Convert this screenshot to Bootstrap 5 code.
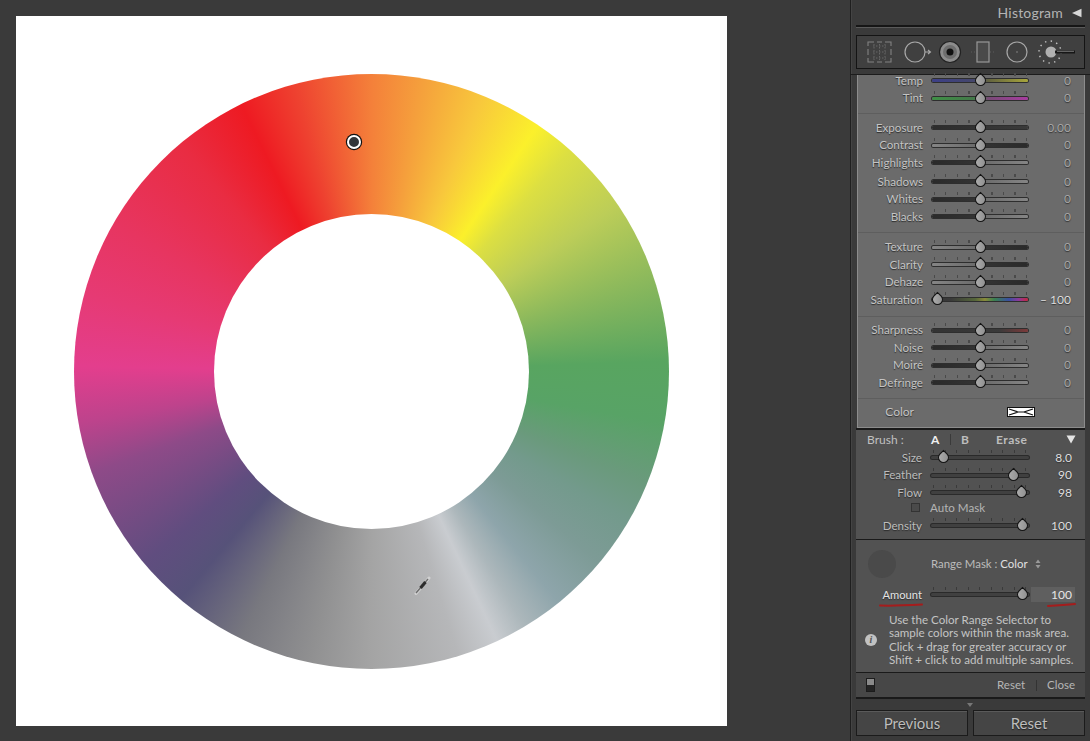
<!DOCTYPE html>
<html lang="en">
<head>
<meta charset="utf-8">
<title>Range Mask: Color</title>
<link href="https://cdn.jsdelivr.net/npm/bootstrap@5.3.0/dist/css/bootstrap.min.css" rel="stylesheet">
<style>
html,body{height:741px;overflow:hidden;}
body{background:#3a3a3a;font-family:Lato,"Open Sans",sans-serif;font-size:12px;color:#c4c4c4;line-height:1;}
.work-area{width:850px;height:741px;padding:16px 123px 15px 16px;flex:none;}
.photo-canvas{width:711px;height:710px;background:#fff;position:relative;}
.wheel{width:595px;height:595px;border-radius:50%;background:conic-gradient(from 0deg,#f4803a 0deg,#f5a03c 10deg,#f8c83c 22deg,#fbf02b 34deg,#dcdf42 42deg,#bccd58 56deg,#8ab85c 72deg,#58a560 88deg,#58a366 100deg,#6a9a7c 112deg,#739a8c 120deg,#7d9b96 130deg,#8ea5ab 141deg,#acb7bb 149deg,#c9ccd0 155deg,#b6b7b9 163deg,#a4a4a4 180deg,#909091 192deg,#78787f 206deg,#565279 220deg,#604d7f 230deg,#8e4a88 250deg,#bd438c 260deg,#e33e8d 271deg,#e63a74 285deg,#e73560 300deg,#e92c42 320deg,#ee1a22 334deg,#ee4230 345deg,#f4803a 360deg);}
.wheel-hole{width:315px;height:315px;border-radius:50%;background:#fff;}
.sample-pin{position:absolute;left:331px;top:119px;width:14px;height:14px;border-radius:50%;background:#33363a;border:2.5px solid #fff;box-shadow:0 0 0 1.2px #111;}
.dropper{position:absolute;left:398px;top:559px;}
.side-panel{width:240px;height:741px;flex:none;background:#3a3a3a;box-shadow:inset 1px 0 0 #1f1f1f,inset 2px 0 0 #444;position:relative;}
.panel-head{height:25px;padding:0 8px 0 0;color:#b4b4b4;font-size:14px;letter-spacing:.2px;}
.head-rule{height:3px;margin:0 5px 0 6px;background:#161616;border-bottom:1px solid #5a5a5a;}
.tool-strip{height:34px;margin:7px 5px 0 6px;background:#404040;border:1px solid #141414;padding:0;}
.strip-base{height:6px;border-bottom:1px solid #1c1c1c;}
.tone-panel{display:flow-root;height:353px;margin:0 5px 0 7px;background:#6b6b6b;border:1px solid #8c8c8c;border-top:0;}
.tone-group{border-bottom:1px solid #5e5e5e;}
.tg-a{margin-top:-3px;padding-bottom:6px;}
.tg-b{padding:5px 0 6px;}
.tg-c{padding:6px 0 7px;}
.tg-d{padding:5px 0 6px;}
.tg-e{border:0;height:27px;}
.adj-row{height:17.5px;}
.gap-shadow{margin-top:1.5px;}
.adj-name{width:65px;text-align:right;flex:none;color:#c4c4c4;font-size:11.6px;text-shadow:0 1px 1px #2c2c2c;white-space:nowrap;}
.adj-track{width:96px;height:3px;margin:0 0 0 9px;flex:none;border-radius:2px;position:relative;background:#333;box-shadow:0 0 0 1px #2e2e2e;}
.adj-track::before{content:"";position:absolute;left:2px;right:0;top:-6px;height:3px;background:repeating-linear-gradient(90deg,#4a4a4a 0,#4a4a4a 1px,transparent 1px,transparent 11.5px);}
.adj-knob{position:absolute;top:-4px;width:11px;height:11px;margin-left:-5.5px;background:linear-gradient(135deg,#b0b0b0,#8c8c8c);border:1.5px solid #141414;border-radius:50% 0 50% 50%;transform:rotate(-45deg);}
.adj-value{flex:1;text-align:right;padding-right:13px;color:#a6a6a6;text-shadow:0 1px 1px #333;}
.adj-value.on{color:#dedede;}
.tr-cold{background:linear-gradient(90deg,#3c3f88,#45476a 45%,#65653f 60%,#a8a63c);}
.tr-tint{background:linear-gradient(90deg,#3f9046,#44784a 45%,#7a4a78 60%,#a83ca0);}
.tr-ld{background:linear-gradient(90deg,#858585,#6c6c6c 45%,#333 55%,#2a2a2a);}
.tr-dl{background:linear-gradient(90deg,#2a2a2a,#333 45%,#6c6c6c 55%,#858585);}
.tr-dd{background:linear-gradient(90deg,#2c2c2c,#3a3a3a);}
.tr-hue{background:linear-gradient(90deg,#333,#3a3a3a 20%,#55663a 45%,#8a8a3a 55%,#3a8050 65%,#3a4fa0 80%,#8a3a9c 90%,#c8263c);}
.tr-sharp{background:linear-gradient(90deg,#333,#3a3a3a 70%,#7c3a3a);}
.tr-dark{background:#404040;box-shadow:0 0 0 1px #2a2a2a;}
.tr-dark::before{background:repeating-linear-gradient(90deg,#3a3a3a 0,#3a3a3a 1px,transparent 1px,transparent 11.5px);}
.color-label{width:56px;text-align:right;flex:none;color:#c4c4c4;text-shadow:0 1px 1px #2c2c2c;}
.color-chip{margin-left:93px;line-height:0;}
.brush-panel{height:112px;margin:0 5px 0 6px;background:#525252;border-top:2px solid #1a1a1a;border-bottom:1px solid #1a1a1a;padding-top:2px;}
.brush-head{height:15px;padding-left:11px;margin-bottom:2px;}
.brush-title{width:64px;color:#c0c0c0;}
.brush-on{color:#f0f0f0;font-weight:700;width:9px;}
.brush-sep{width:1px;height:11px;background:#3a3a3a;margin:0 10px 0 10px;}
.brush-b{color:#bdbdbd;font-weight:700;width:35px;}
.brush-erase{color:#bdbdbd;font-weight:700;letter-spacing:.5px;width:70px;}
.brush-panel .adj-name{color:#bcbcbc;}
.brush-panel .adj-track,.mask-panel .adj-track{width:98px;margin-left:9px;}
.brush-panel .adj-name,.mask-panel .adj-name{width:66px;}
.brush-panel .adj-value{padding-right:13px;}
.auto-row{height:12.5px;margin-bottom:3px;}
.auto-check{width:9px;height:9px;border:1px solid #333;background:#4a4a4a;margin-left:55px;margin-right:10px;}
.auto-text{color:#b4b4b4;font-size:11.6px;}
.mask-panel{height:133px;margin:0 5px 0 6px;background:#525252;border-bottom:1px solid #1a1a1a;position:relative;padding-top:13px;}
.mask-head{height:21px;}
.mask-dot{width:28px;height:28px;border-radius:50%;background:#4a4a4a;margin-left:12px;flex:none;}
.mask-title{margin-left:35px;color:#bcbcbc;font-size:11.4px;white-space:nowrap;}
.mask-title b{color:#e0e0e0;font-weight:400;}
.mask-arrows{margin-left:7px;line-height:0;}
.amount-row{margin-top:12px;height:17.5px;}
.amount-row .adj-name{color:#e4e4e4;font-size:11.2px;}
.amount-box{width:44px;height:15px;background:#5f5f5f;margin-left:2px;text-align:right;padding:1px 3px 0 0;color:#e6e6e6;flex:none;line-height:13px;}
.ink{position:absolute;left:0;top:0;pointer-events:none;}
.mask-help{margin-top:9px;padding-left:9px;}
.help-dot{width:12px;height:12px;border-radius:50%;background:#c2c2c2;color:#555;font:italic 700 10px/12px "Liberation Serif",serif;text-align:center;flex:none;}
.help-copy{margin-left:12px;color:#c4c4c4;font-size:11.6px;line-height:13.6px;white-space:nowrap;}
.foot-row{height:26px;margin:0 5px 0 6px;background:#474747;border-bottom:2px solid #1a1a1a;padding-left:10px;color:#b6b6b6;font-size:11.5px;}
.foot-switch{width:9px;height:14px;border:1px solid #1c1c1c;background:linear-gradient(#8a8a8a 50%,#242424 50%);}
.foot-reset{margin-left:122px;}
.foot-bar{width:1px;height:11px;background:#333;margin:0 10px 0 11px;}
.nudge{height:11px;}
.action-row{margin:0 5px 0 6px;gap:5px;}
.action-btn{flex:1;height:26px;padding:0;background:#454545;border:1px solid #1b1b1b;border-radius:0;color:#bdbdbd;font-family:inherit;font-size:15px;text-shadow:0 1px 1px #222;box-shadow:inset 0 1px 0 #5a5a5a;}
.action-btn:hover{background:#454545;color:#bdbdbd;border-color:#1b1b1b;}
</style>
</head>
<body class="d-flex">
<main class="work-area">
  <div class="photo-canvas d-flex align-items-center justify-content-center">
    <div class="wheel d-flex align-items-center justify-content-center"><div class="wheel-hole"></div></div>
    <div class="sample-pin"></div>
    <svg class="dropper" width="18" height="20" viewBox="0 0 18 20"><path d="M2 18.500 L15 3" stroke="#ddd" stroke-width="3" stroke-linecap="round" opacity=".7"/><path d="M2 18 L14 4" stroke="#6c6c6c" stroke-width="1.400"/><path d="M6.500 13 L11.500 7" stroke="#2c2c2c" stroke-width="3.200"/></svg>
  </div>
</main>
<aside class="side-panel">
  <div class="panel-head d-flex align-items-center justify-content-end">
    <span>Histogram</span>
    <svg class="ms-2" width="11" height="10" viewBox="0 0 11 10"><path d="M1 5 L10.500 .8 V9.200 Z" fill="#d8d8d8"/></svg>
  </div>
  <div class="head-rule"></div>
  <div class="tool-strip">
    <svg width="228" height="32" viewBox="0 0 228 32" fill="none">
      <g stroke="#828282" stroke-width="1.100"><path d="M11 10V6h6M28 6h6v4M11 22v4h6M28 26h6v-4M20 6h5M20 26h5M11 13v6M34 13v6"/></g>
      <g stroke="#666" stroke-width="1" stroke-dasharray="1.500 1.500"><path d="M16 10h13M16 16h13M16 22h13M17 8v16M22.500 8v16M28 8v16"/></g>
      <circle cx="58" cy="16" r="10" stroke="#a8a8a8" stroke-width="1.200"/><path d="M68 16h5M71 14l2.500 2-2.500 2" stroke="#a8a8a8" stroke-width="1.100"/>
      <circle cx="93" cy="16" r="10.500" fill="#8c8c8c" stroke="#222" stroke-width="1.200"/><circle cx="93" cy="16" r="7" fill="#6e6e6e"/><circle cx="93" cy="16" r="3.500" fill="#111"/>
      <rect x="120" y="6" width="12" height="20" fill="#4a4a4a" stroke="#989898" stroke-width="1.200"/><path d="M114 16h5M133 16h5" stroke="#5c5c5c" stroke-dasharray="1 2"/>
      <circle cx="160" cy="16" r="10" stroke="#a8a8a8" stroke-width="1.200"/><circle cx="160" cy="16" r=".7" fill="#999"/>
      <circle cx="193" cy="16" r="11" stroke="#c4c4c4" stroke-width="1.400" stroke-dasharray="1.400 4.400"/><circle cx="194" cy="16" r="5.500" fill="#b0b0b0"/><rect x="198" y="14.500" width="20" height="3" fill="#161616"/><rect x="200" y="14.800" width="17" height="1" fill="#777"/>
    </svg>
  </div>
  <div class="strip-base"></div>

  <section class="tone-panel">
    <div class="tone-group tg-a">
      <div class="adj-row d-flex align-items-center"><span class="adj-name">Temp</span><div class="adj-track tr-cold"><i class="adj-knob" style="left:50%"></i></div><span class="adj-value">0</span></div>
      <div class="adj-row d-flex align-items-center"><span class="adj-name">Tint</span><div class="adj-track tr-tint"><i class="adj-knob" style="left:50%"></i></div><span class="adj-value">0</span></div>
    </div>
    <div class="tone-group tg-b">
      <div class="adj-row d-flex align-items-center"><span class="adj-name">Exposure</span><div class="adj-track tr-dd"><i class="adj-knob" style="left:50%"></i></div><span class="adj-value">0.00</span></div>
      <div class="adj-row d-flex align-items-center"><span class="adj-name">Contrast</span><div class="adj-track tr-ld"><i class="adj-knob" style="left:50%"></i></div><span class="adj-value">0</span></div>
      <div class="adj-row d-flex align-items-center"><span class="adj-name">Highlights</span><div class="adj-track tr-dl"><i class="adj-knob" style="left:50%"></i></div><span class="adj-value">0</span></div>
      <div class="adj-row gap-shadow d-flex align-items-center"><span class="adj-name">Shadows</span><div class="adj-track tr-dl"><i class="adj-knob" style="left:50%"></i></div><span class="adj-value">0</span></div>
      <div class="adj-row d-flex align-items-center"><span class="adj-name">Whites</span><div class="adj-track tr-dl"><i class="adj-knob" style="left:50%"></i></div><span class="adj-value">0</span></div>
      <div class="adj-row d-flex align-items-center"><span class="adj-name">Blacks</span><div class="adj-track tr-dl"><i class="adj-knob" style="left:50%"></i></div><span class="adj-value">0</span></div>
    </div>
    <div class="tone-group tg-c">
      <div class="adj-row d-flex align-items-center"><span class="adj-name">Texture</span><div class="adj-track tr-ld"><i class="adj-knob" style="left:50%"></i></div><span class="adj-value">0</span></div>
      <div class="adj-row d-flex align-items-center"><span class="adj-name">Clarity</span><div class="adj-track tr-ld"><i class="adj-knob" style="left:50%"></i></div><span class="adj-value">0</span></div>
      <div class="adj-row d-flex align-items-center"><span class="adj-name">Dehaze</span><div class="adj-track tr-ld"><i class="adj-knob" style="left:50%"></i></div><span class="adj-value">0</span></div>
      <div class="adj-row d-flex align-items-center"><span class="adj-name">Saturation</span><div class="adj-track tr-hue"><i class="adj-knob" style="left:6%"></i></div><span class="adj-value on">– 100</span></div>
    </div>
    <div class="tone-group tg-d">
      <div class="adj-row d-flex align-items-center"><span class="adj-name">Sharpness</span><div class="adj-track tr-sharp"><i class="adj-knob" style="left:50%"></i></div><span class="adj-value">0</span></div>
      <div class="adj-row d-flex align-items-center"><span class="adj-name">Noise</span><div class="adj-track tr-dl"><i class="adj-knob" style="left:50%"></i></div><span class="adj-value">0</span></div>
      <div class="adj-row d-flex align-items-center"><span class="adj-name">Moiré</span><div class="adj-track tr-dl"><i class="adj-knob" style="left:50%"></i></div><span class="adj-value">0</span></div>
      <div class="adj-row d-flex align-items-center"><span class="adj-name">Defringe</span><div class="adj-track tr-dl"><i class="adj-knob" style="left:50%"></i></div><span class="adj-value">0</span></div>
    </div>
    <div class="tone-group tg-e d-flex align-items-center">
      <span class="color-label">Color</span>
      <span class="color-chip"><svg width="28" height="10" viewBox="0 0 28 10"><rect x=".5" y=".5" width="27" height="9" fill="#fff" stroke="#111"/><path d="M2 2l9 3-9 3M26 2l-9 3 9 3M11 5h6" fill="none" stroke="#111" stroke-width="1.200"/></svg></span>
    </div>
  </section>

  <section class="brush-panel">
    <div class="brush-head d-flex align-items-center">
      <span class="brush-title">Brush :</span><span class="brush-on">A</span><span class="brush-sep"></span><span class="brush-b">B</span><span class="brush-erase">Erase</span>
      <svg width="10" height="9" viewBox="0 0 10 9"><path d="M.5 .5H9.500L5 8.500Z" fill="#e4e4e4"/></svg>
    </div>
    <div class="adj-row d-flex align-items-center"><span class="adj-name">Size</span><div class="adj-track tr-dark"><i class="adj-knob" style="left:13%"></i></div><span class="adj-value on">8.0</span></div>
    <div class="adj-row d-flex align-items-center"><span class="adj-name">Feather</span><div class="adj-track tr-dark"><i class="adj-knob" style="left:84%"></i></div><span class="adj-value on">90</span></div>
    <div class="adj-row d-flex align-items-center"><span class="adj-name">Flow</span><div class="adj-track tr-dark"><i class="adj-knob" style="left:92%"></i></div><span class="adj-value on">98</span></div>
    <div class="auto-row d-flex align-items-center"><span class="auto-check"></span><span class="auto-text">Auto Mask</span></div>
    <div class="adj-row d-flex align-items-center"><span class="adj-name">Density</span><div class="adj-track tr-dark"><i class="adj-knob" style="left:93%"></i></div><span class="adj-value on">100</span></div>
  </section>

  <section class="mask-panel">
    <div class="mask-head d-flex align-items-center">
      <span class="mask-dot"></span>
      <span class="mask-title">Range Mask : <b>Color</b></span>
      <span class="mask-arrows"><svg width="6" height="10" viewBox="0 0 6 10"><path d="M.5 4L3 .5 5.500 4ZM.5 6L3 9.500 5.500 6Z" fill="#999"/></svg></span>
    </div>
    <div class="amount-row d-flex align-items-center">
      <span class="adj-name">Amount</span>
      <div class="adj-track tr-dark"><i class="adj-knob" style="left:93%"></i></div>
      <span class="amount-box">100</span>
    </div>
    <svg class="ink" width="228" height="132" viewBox="0 0 228 132" fill="none"><path d="M24 65.500C35 66 48 65.500 66 64.500" stroke="#a51c1c" stroke-width="2" stroke-linecap="round"/><path d="M192 66C202 65.500 210 65 219 64" stroke="#a51c1c" stroke-width="2" stroke-linecap="round"/></svg>
    <div class="mask-help d-flex align-items-center">
      <span class="help-dot">i</span>
      <div class="help-copy">Use the Color Range Selector to<br>sample colors within the mask area.<br>Click + drag for greater accuracy or<br>Shift + click to add multiple samples.</div>
    </div>
  </section>

  <div class="foot-row d-flex align-items-center">
    <span class="foot-switch"></span><span class="foot-reset">Reset</span><span class="foot-bar"></span><span>Close</span>
  </div>
  <div class="nudge d-flex justify-content-center align-items-center"><svg width="6" height="4" viewBox="0 0 6 4"><path d="M0 0H6L3 4Z" fill="#777"/></svg></div>
  <div class="action-row d-flex">
    <button type="button" class="btn action-btn">Previous</button>
    <button type="button" class="btn action-btn">Reset</button>
  </div>
</aside>
</body>
</html>
